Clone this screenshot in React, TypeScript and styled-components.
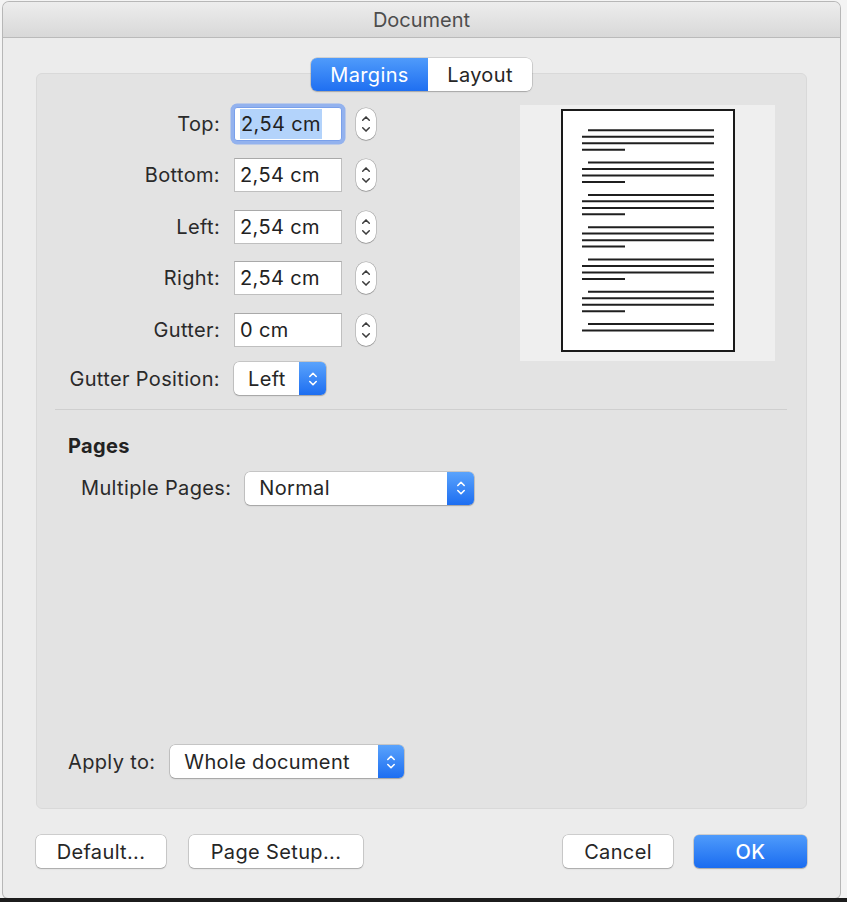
import styled, { createGlobalStyle } from 'styled-components';

const GlobalStyle = createGlobalStyle`
  html, body {
    margin: 0;
    padding: 0;
  }
  body {
    background: #f3f3f3;
    font-family: Inter, "Liberation Sans", sans-serif;
    letter-spacing: 0.35px;
    color: #262626;
  }
`;

type PopupProps = {
  value: string;
  width: number;
  arrowWidth: number;
};

function UpDown({ color, size }: { color: string; size: 'small' | 'stepper' }) {
  if (size === 'stepper') {
    return (
      <svg width="20" height="32" viewBox="0 0 20 32" fill="none">
        <path d="M6.7 12.3 L10 8.9 L13.3 12.3" stroke={color} strokeWidth="1.5" strokeLinecap="round" strokeLinejoin="round" />
        <path d="M6.7 19.7 L10 23.1 L13.3 19.7" stroke={color} strokeWidth="1.5" strokeLinecap="round" strokeLinejoin="round" />
      </svg>
    );
  }
  return (
    <svg width="12" height="20" viewBox="0 0 12 20" fill="none">
      <path d="M2.8 7.5 L6 4.3 L9.2 7.5" stroke={color} strokeWidth="1.6" strokeLinecap="round" strokeLinejoin="round" />
      <path d="M2.8 12.5 L6 15.7 L9.2 12.5" stroke={color} strokeWidth="1.6" strokeLinecap="round" strokeLinejoin="round" />
    </svg>
  );
}

function Popup({ value, width, arrowWidth }: PopupProps) {
  return (
    <PopupBox style={{ width }}>
      <PopupText>{value}</PopupText>
      <PopupArrow style={{ width: arrowWidth }}>
        <UpDown color="#fff" size="small" />
      </PopupArrow>
    </PopupBox>
  );
}

function PagePreview() {
  const groups = Array.from({ length: 7 }, (_, g) => 19.3 + g * 32.3);
  return (
    <PreviewArea>
      <PreviewPage>
        <svg width="170" height="239" viewBox="0 0 170 239">
          {groups.map((y, g) => (
            <g key={g} stroke="#1f1f1f" strokeWidth="2">
              <line x1="25" y1={y} x2="151" y2={y} />
              <line x1="19" y1={y + 6.4} x2="151" y2={y + 6.4} />
              {g < 6 && <line x1="19" y1={y + 13} x2="151" y2={y + 13} />}
              {g < 6 && <line x1="19" y1={y + 19.4} x2="62" y2={y + 19.4} />}
            </g>
          ))}
        </svg>
      </PreviewPage>
    </PreviewArea>
  );
}

const fields = [
  { label: 'Top:', value: '2,54 cm', focused: true },
  { label: 'Bottom:', value: '2,54 cm', focused: false },
  { label: 'Left:', value: '2,54 cm', focused: false },
  { label: 'Right:', value: '2,54 cm', focused: false },
  { label: 'Gutter:', value: '0 cm', focused: false },
];

export default function App() {
  return (
    <>
      <GlobalStyle />
      <Screen>
        <Window>
          <TitleBar>Document</TitleBar>
          <Body>
            <Tabs>
              <Tab $active $width={117}>Margins</Tab>
              <Tab $active={false} $width={104}>Layout</Tab>
            </Tabs>
            <Panel>
              <TopSection>
                <FieldGrid>
                  {fields.map((f) => (
                    <FieldRow key={f.label}>
                      <Label>{f.label}</Label>
                      <TextBox $focused={f.focused}>
                        {f.focused ? <Selected>{f.value}</Selected> : f.value}
                      </TextBox>
                      <Stepper>
                        <UpDown color="#3c3c3c" size="stepper" />
                      </Stepper>
                    </FieldRow>
                  ))}
                  <LastRow>
                    <Label>Gutter Position:</Label>
                    <PopupCell>
                      <Popup value="Left" width={92} arrowWidth={27} />
                    </PopupCell>
                  </LastRow>
                </FieldGrid>
                <PagePreview />
              </TopSection>
              <Separator />
              <SectionTitle>Pages</SectionTitle>
              <IndentedRow>
                <Label>Multiple Pages:</Label>
                <Popup value="Normal" width={229} arrowWidth={27} />
              </IndentedRow>
              <ApplyRow>
                <Label>Apply to:</Label>
                <Popup value="Whole document" width={234} arrowWidth={26} />
              </ApplyRow>
            </Panel>
            <ButtonRow>
              <LeftButtons>
                <PushButton $width={130}>Default...</PushButton>
                <PushButton $width={174}>Page Setup...</PushButton>
              </LeftButtons>
              <RightButtons>
                <PushButton $width={110}>Cancel</PushButton>
                <PushButton $width={113} $primary>OK</PushButton>
              </RightButtons>
            </ButtonRow>
          </Body>
        </Window>
      </Screen>
    </>
  );
}

// Styled Components
const Screen = styled.div`
  width: 847px;
  height: 902px;
  box-sizing: border-box;
  padding: 2px 7px 0 3px;
  background: #f4f4f4;
  border-bottom: 4px solid #1c1c1c;
  display: flex;
  overflow: hidden;
`;

const Window = styled.div`
  flex: 1;
  height: 896px;
  display: flex;
  flex-direction: column;
  background: #ececec;
  border-radius: 6px 6px 5px 5px;
  box-shadow: 0 0 0 1px #b7b7b7;
  overflow: hidden;
`;

const TitleBar = styled.div`
  height: 35px;
  flex-shrink: 0;
  display: flex;
  align-items: center;
  justify-content: center;
  background: linear-gradient(#ededed, #d8d8d8);
  border-bottom: 1px solid #bababa;
  font-size: 20px;
  letter-spacing: 0;
  color: #4d4d4d;
`;

const Body = styled.div`
  flex: 1;
  display: flex;
  flex-direction: column;
  padding: 20px 33px 30px 33px;
  min-height: 0;
`;

const Tabs = styled.div`
  align-self: center;
  display: flex;
  height: 33px;
  margin-bottom: -18px;
  position: relative;
  z-index: 1;
  border-radius: 6px;
  box-shadow: 0 0 0 0.5px rgba(0, 0, 0, 0.22), 0 1px 1.5px rgba(0, 0, 0, 0.18);
  overflow: hidden;
`;

const Tab = styled.div<{ $active: boolean; $width: number }>`
  width: ${(p) => p.$width}px;
  display: flex;
  align-items: center;
  justify-content: center;
  font-size: 20px;
  color: ${(p) => (p.$active ? '#ffffff' : '#262626')};
  background: ${(p) => (p.$active ? 'linear-gradient(#4f9bfb, #1f6ff1)' : '#ffffff')};
`;

const Panel = styled.div`
  flex: 1;
  display: flex;
  flex-direction: column;
  background: #e3e3e3;
  border: 1px solid #d9d9d9;
  border-radius: 6px;
  padding: 31px 31px 30px 31px;
`;

const TopSection = styled.div`
  display: flex;
  justify-content: space-between;
  align-items: flex-start;
`;

const FieldGrid = styled.div`
  display: grid;
  grid-template-columns: 152px 108px 20px;
  column-gap: 14px;
  row-gap: 17.5px;
  margin-top: 1.5px;
`;

const FieldRow = styled.div`
  display: contents;
`;

const LastRow = styled.div`
  display: contents;

  & > * {
    margin-top: -2px;
  }
`;

const Label = styled.div`
  align-self: center;
  justify-self: end;
  font-size: 20px;
  color: #2a2a2a;
  white-space: nowrap;
`;

const TextBox = styled.div<{ $focused: boolean }>`
  height: 34px;
  box-sizing: border-box;
  display: flex;
  align-items: center;
  padding-left: 5px;
  background: #ffffff;
  border: 1px solid ${(p) => (p.$focused ? '#7aa0ea' : '#bfbfbf')};
  border-top-color: ${(p) => (p.$focused ? '#7aa0ea' : '#a9a9a9')};
  border-radius: ${(p) => (p.$focused ? '3px' : '0')};
  box-shadow: ${(p) => (p.$focused ? '0 0 0 3.5px #93b2ee' : 'none')};
  font-size: 20px;
  color: #222;
`;

const Selected = styled.span`
  background: #b3d3fb;
  padding: 3px 1px 3px 1px;
`;

const Stepper = styled.div`
  align-self: center;
  width: 20px;
  height: 32px;
  box-sizing: border-box;
  background: #ffffff;
  border-radius: 10px;
  box-shadow: 0 0 0 0.5px rgba(0, 0, 0, 0.28), 0 1px 1px rgba(0, 0, 0, 0.15);
  display: flex;
  align-items: center;
  justify-content: center;
`;

const PopupCell = styled.div`
  grid-column: 2 / 4;
`;

const PopupBox = styled.div`
  height: 33px;
  display: flex;
  background: #ffffff;
  border-radius: 5px;
  overflow: hidden;
  box-shadow: 0 0 0 0.5px rgba(0, 0, 0, 0.25), 0 1px 1.5px rgba(0, 0, 0, 0.18);
`;

const PopupText = styled.div`
  flex: 1;
  display: flex;
  align-items: center;
  padding-left: 14px;
  font-size: 20px;
  color: #262626;
  white-space: nowrap;
`;

const PopupArrow = styled.div`
  display: flex;
  align-items: center;
  justify-content: center;
  background: linear-gradient(#5aa3fc, #1d6ef1);
`;

const PreviewArea = styled.div`
  width: 255px;
  height: 256px;
  box-sizing: border-box;
  padding-top: 4px;
  background: #efefef;
  display: flex;
  justify-content: center;
  align-items: flex-start;
`;

const PreviewPage = styled.div`
  width: 170px;
  height: 239px;
  border: 2px solid #1a1a1a;
  background: #ffffff;
  display: flex;
`;

const Separator = styled.div`
  height: 1px;
  background: #cfcfcf;
  margin: 14px -12px 0 -13px;
`;

const SectionTitle = styled.div`
  margin-top: 24px;
  font-size: 20px;
  line-height: 24px;
  font-weight: 700;
  color: #222;
`;

const IndentedRow = styled.div`
  display: flex;
  align-items: center;
  gap: 14px;
  margin-top: 13.5px;
  padding-left: 13px;
`;

const ApplyRow = styled.div`
  display: flex;
  align-items: center;
  gap: 15px;
  margin-top: auto;
`;

const ButtonRow = styled.div`
  display: flex;
  justify-content: space-between;
  margin-top: 26px;
`;

const LeftButtons = styled.div`
  display: flex;
  gap: 23px;
`;

const RightButtons = styled.div`
  display: flex;
  gap: 21px;
`;

const PushButton = styled.div<{ $width: number; $primary?: boolean }>`
  width: ${(p) => p.$width}px;
  height: 33px;
  display: flex;
  align-items: center;
  justify-content: center;
  border-radius: 5px;
  font-size: 20px;
  color: ${(p) => (p.$primary ? '#ffffff' : '#262626')};
  font-weight: ${(p) => (p.$primary ? 500 : 400)};
  background: ${(p) => (p.$primary ? 'linear-gradient(#4f9bfb, #1a6cf0)' : '#ffffff')};
  box-shadow: 0 0 0 0.5px rgba(0, 0, 0, 0.25), 0 1px 1.5px rgba(0, 0, 0, 0.18);
`;
